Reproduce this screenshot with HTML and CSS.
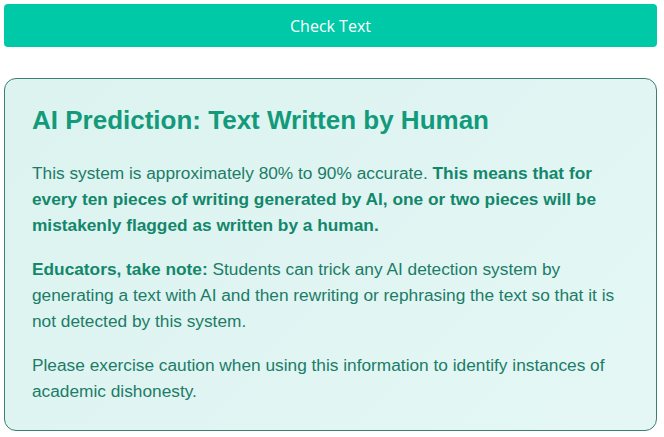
FILE: index.html
```html
<!DOCTYPE html>
<html lang="en">
<head>
    <meta charset="UTF-8">
    <meta name="viewport" content="width=device-width, initial-scale=1.0">
    <title>AI Text Checker</title>
    <link rel="stylesheet" href="styles.css">
</head>
<body>
    <div class="checker">
        <button type="button" class="btn-check">Check Text</button>

        <div class="result-box">
            <h2>AI Prediction: Text Written by Human</h2>
            <p>This system is approximately 80% to 90% accurate. <strong>This means that for every ten pieces of writing generated by AI, one or two pieces will be mistakenly flagged as written by a human.</strong></p>
            <p><strong>Educators, take note:</strong> Students can trick any AI detection system by generating a text with AI and then rewriting or rephrasing the text so that it is not detected by this system.</p>
            <p>Please exercise caution when using this information to identify instances of academic dishonesty.</p>
        </div>
    </div>
</body>
</html>
```

FILE: styles.css
```css
body {
    margin: 0;
    padding: 0;
    background-color: #ffffff;
    font-family: 'Liberation Sans', Arial, sans-serif;
}

.checker {
    display: flex;
    flex-direction: column;
    gap: 31px;
    padding: 4px 7px 0 4px;
}

.btn-check {
    width: 100%;
    height: 43px;
    background-color: #00c9a7;
    color: #ffffff;
    border: none;
    border-radius: 4px;
    font-family: 'Open Sans', 'Segoe UI', sans-serif;
    font-size: 16px;
    cursor: pointer;
}

.result-box {
    background: linear-gradient(135deg, #dcf3f0, #e4f7f5);
    border: 1px solid #3d7f73;
    border-radius: 12px;
    padding: 26px 27px 26px 27px;
    color: #1c7c67;
}

.result-box h2 {
    margin: 0 0 24px 0;
    font-size: 26px;
    color: #129a7b;
}

.result-box p {
    margin: 0 0 18px 0;
    font-size: 17.3px;
    line-height: 26px;
}

.result-box p:last-child {
    margin-bottom: 0;
}

.result-box strong {
    color: #13876b;
}
```
